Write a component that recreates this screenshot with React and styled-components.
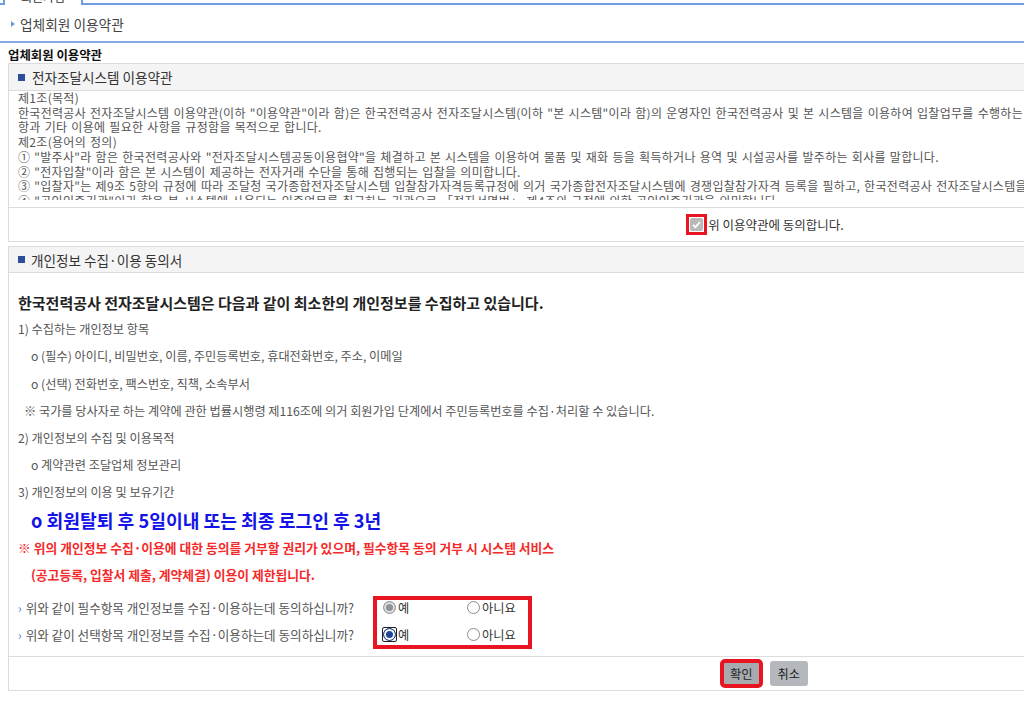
import React from "react";
import styled, { createGlobalStyle } from "styled-components";

const GlobalStyle = createGlobalStyle`
	html,
	body {
		margin: 0;
		padding: 0;
		overflow: hidden;
		background: #fff;
	}
	body {
		font-family: "Noto Sans CJK KR", "Malgun Gothic", sans-serif;
		color: #555;
	}
	* {
		box-sizing: border-box;
	}
`;

const Page = styled.div`
	width: 1530px;
`;

const TabBar = styled.div`
	display: flex;
	align-items: flex-end;
	height: 5px;
	padding-left: 3px;
	border-bottom: 2px solid #6f9be0;
`;

const Tab = styled.div`
	flex-shrink: 0;
	width: 80px;
	height: 16px;
	margin-bottom: -2px;
	border: 2px solid #6f9be0;
	border-bottom: none;
	background: #fff;
	font-size: 12px;
	line-height: 12px;
	text-align: center;
	color: #333;
`;

const Breadcrumb = styled.div`
	display: flex;
	align-items: center;
	gap: 5px;
	padding: 11px 0 9px 11px;
	line-height: 16px;
	font-size: 13.7px;
	color: #444;
	border-bottom: 2px solid #86a9e1;
`;

const Arrow = styled.span`
	width: 0;
	height: 0;
	border-left: 4px solid #6e9be0;
	border-top: 3.5px solid transparent;
	border-bottom: 3.5px solid transparent;
`;

const Title = styled.h2`
	margin: 0;
	padding: 5px 8px 0;
	line-height: 15px;
	font-size: 12.4px;
	font-weight: 700;
	color: #111;
`;

const Box = styled.section`
	margin: ${(p) => (p.$spaced ? "4px" : "0")} 8px 0;
	border: 1px solid #dcdcdc;
`;

const BoxHeader = styled.div`
	display: flex;
	align-items: center;
	gap: ${(p) => p.$gap}px;
	height: ${(p) => p.$height}px;
	padding-left: ${(p) => p.$pad}px;
	background: #f4f4f4;
	border-bottom: 1px solid #dcdcdc;
	font-size: ${(p) => p.$size}px;
	color: #333;
`;

const Square = styled.span`
	width: ${(p) => p.$size}px;
	height: ${(p) => p.$size}px;
	background: #2c4d9b;
`;

const TermsCell = styled.div`
	padding: 0 9px 7px;
	border-bottom: 1px solid #dcdcdc;
`;

const TermsScroll = styled.div`
	height: 109px;
	overflow: hidden;
	font-size: 12px;
	line-height: 14.7px;
	letter-spacing: 0.3px;
	word-spacing: 1px;
	color: #555;
	white-space: nowrap;

	p {
		margin: 0;
	}
`;

const AgreeRow = styled.label`
	display: flex;
	justify-content: center;
	align-items: center;
	gap: 1px;
	height: 33px;
	font-size: 12.5px;
	color: #333;
`;

const Mark = styled.span`
	display: inline-flex;
	padding: 1px;
	border: 3px solid #e8141f;
`;

const Checkbox = styled.span`
	display: inline-flex;
	align-items: center;
	justify-content: center;
	width: 13px;
	height: 13px;
	border-radius: 2px;
	background: #b9b9b9;
`;

const Content = styled.div`
	padding: 16px 9px 8px;
	line-height: 27.2px;
	white-space: nowrap;
`;

const Heading = styled.div`
	font-size: 15px;
	font-weight: 700;
	color: #222;
`;

const Line = styled.div`
	padding-left: ${(p) => p.$indent || 0}px;
	font-size: 12.2px;
	color: #555;
`;

const Highlight = styled.div`
	padding-left: 13px;
	font-size: 18.2px;
	font-weight: 700;
	color: #1414e8;
`;

const Warning = styled.div`
	padding-left: ${(p) => p.$indent || 0}px;
	font-size: 12.8px;
	font-weight: 700;
	color: #f52a2a;
`;

const QuestionArea = styled.div`
	display: flex;
	padding-left: 9px;
	margin-bottom: 7px;
`;

const Questions = styled.div`
	display: flex;
	flex-direction: column;
	gap: 12px;
	width: 355px;
	padding-top: 4px;
`;

const Question = styled.div`
	display: flex;
	align-items: center;
	gap: 4px;
	height: 15px;
	font-size: 12.6px;
	color: #555;
	white-space: nowrap;
`;

const Chevron = styled.span`
	font-size: 12px;
	color: #4d7fd3;
`;

const Answers = styled.div`
	display: flex;
	flex-direction: column;
	gap: 12px;
	padding: 0 12px 3px 6px;
	border: 4px solid #e8141f;
`;

const AnswerRow = styled.div`
	display: flex;
	align-items: center;
	height: 15px;
`;

const Option = styled.label`
	display: flex;
	align-items: center;
	gap: 2px;
	width: ${(p) => p.$width || "auto"};
	font-size: 12.2px;
	color: #333;
`;

const radioLook = {
	disabled: "border: 1px solid #9a9a9a; background: #8f9397; box-shadow: inset 0 0 0 2px #dedede;",
	off: "border: 1px solid #8a8a8a; background: #fff;",
	on: "border: 1px solid #1c3f82; background: #1f4796; box-shadow: inset 0 0 0 2px #fff;",
};

const Radio = styled.span`
	position: relative;
	flex-shrink: 0;
	width: 13px;
	height: 13px;
	border-radius: 50%;
	${(p) => radioLook[p.$state]}

	${(p) =>
		p.$focused &&
		`
		&::after {
			content: "";
			position: absolute;
			inset: -2px;
			border: 1px solid #222;
			border-radius: 2px;
		}
	`}
`;

const ButtonRow = styled.div`
	display: flex;
	justify-content: center;
	align-items: center;
	gap: 9px;
	height: 34px;
	border-top: 1px solid #dcdcdc;
`;

const Button = styled.button`
	height: 25px;
	padding: 0 8px;
	border: none;
	border-radius: 3px;
	background: ${(p) => (p.$primary ? "#a7abaf" : "#b4b8bc")};
	font-family: inherit;
	font-size: 12.2px;
	color: #222;
	cursor: pointer;
	${(p) => p.$marked && "outline: 4px solid #e8141f; outline-offset: -2px;"}
`;

const terms = [
	"제1조(목적)",
	'한국전력공사 전자조달시스템 이용약관(이하 "이용약관"이라 함)은 한국전력공사 전자조달시스템(이하 "본 시스템"이라 함)의 운영자인 한국전력공사 및 본 시스템을 이용하여 입찰업무를 수행하는 자의 권리, 의무 및 책임사',
	"항과 기타 이용에 필요한 사항을 규정함을 목적으로 합니다.",
	"제2조(용어의 정의)",
	'① "발주사"라 함은 한국전력공사와 "전자조달시스템공동이용협약"을 체결하고 본 시스템을 이용하여 물품 및 재화 등을 획득하거나 용역 및 시설공사를 발주하는 회사를 말합니다.',
	'② "전자입찰"이라 함은 본 시스템이 제공하는 전자거래 수단을 통해 집행되는 입찰을 의미합니다.',
	'③ "입찰자"는 제9조 5항의 규정에 따라 조달청 국가종합전자조달시스템 입찰참가자격등록규정에 의거 국가종합전자조달시스템에 경쟁입찰참가자격 등록을 필하고, 한국전력공사 전자조달시스템을 이용하는 자를 말합니다.',
	'④ "공인인증기관"이라 함은 본 시스템에 사용되는 인증업무를 취급하는 기관으로 「전자서명법」 제4조의 규정에 의한 공인인증기관을 의미합니다.',
	"⑤ 기타 이 약관에서 정하지 아니한 용어는 관계 법령에서 정하는 바에 따릅니다.",
];

const questions = [
	{ text: "위와 같이 필수항목 개인정보를 수집·이용하는데 동의하십니까?", yes: "disabled", focused: false },
	{ text: "위와 같이 선택항목 개인정보를 수집·이용하는데 동의하십니까?", yes: "on", focused: true },
];

function App() {
	return (
		<Page>
			<GlobalStyle />
			<TabBar>
				<Tab>회원가입</Tab>
			</TabBar>
			<Breadcrumb>
				<Arrow />
				업체회원 이용약관
			</Breadcrumb>
			<Title>업체회원 이용약관</Title>

			<Box>
				<BoxHeader $height={27} $pad={9} $gap={7} $size={13.6}>
					<Square $size={7} />
					전자조달시스템 이용약관
				</BoxHeader>
				<TermsCell>
					<TermsScroll>
						{terms.map((t, i) => (
							<p key={i}>{t}</p>
						))}
					</TermsScroll>
				</TermsCell>
				<AgreeRow>
					<Mark>
						<Checkbox>
							<svg width="11" height="11" viewBox="0 0 11 11">
								<path d="M2 5.8 L4.4 8.2 L9 3" fill="none" stroke="#fff" strokeWidth="1.8" />
							</svg>
						</Checkbox>
					</Mark>
					위 이용약관에 동의합니다.
				</AgreeRow>
			</Box>

			<Box $spaced>
				<BoxHeader $height={26} $pad={9} $gap={6} $size={13.6}>
					<Square $size={7} />
					개인정보 수집·이용 동의서
				</BoxHeader>
				<Content>
					<Heading>한국전력공사 전자조달시스템은 다음과 같이 최소한의 개인정보를 수집하고 있습니다.</Heading>
					<Line>1) 수집하는 개인정보 항목</Line>
					<Line $indent={13}>o (필수) 아이디, 비밀번호, 이름, 주민등록번호, 휴대전화번호, 주소, 이메일</Line>
					<Line $indent={13}>o (선택) 전화번호, 팩스번호, 직책, 소속부서</Line>
					<Line $indent={6}>
						※ 국가를 당사자로 하는 계약에 관한 법률시행령 제116조에 의거 회원가입 단계에서 주민등록번호를 수집·처리할 수 있습니다.
					</Line>
					<Line>2) 개인정보의 수집 및 이용목적</Line>
					<Line $indent={13}>o 계약관련 조달업체 정보관리</Line>
					<Line>3) 개인정보의 이용 및 보유기간</Line>
					<Highlight>o 회원탈퇴 후 5일이내 또는 최종 로그인 후 3년</Highlight>
					<Warning>
						※ 위의 개인정보 수집·이용에 대한 동의를 거부할 권리가 있으며, 필수항목 동의 거부 시 시스템 서비스
					</Warning>
					<Warning $indent={13}>(공고등록, 입찰서 제출, 계약체결) 이용이 제한됩니다.</Warning>
				</Content>

				<QuestionArea>
					<Questions>
						{questions.map((q) => (
							<Question key={q.text}>
								<Chevron>›</Chevron>
								{q.text}
							</Question>
						))}
					</Questions>
					<Answers>
						{questions.map((q) => (
							<AnswerRow key={q.text}>
								<Option $width="84px">
									<Radio $state={q.yes} $focused={q.focused} />
									예
								</Option>
								<Option>
									<Radio $state="off" />
									아니요
								</Option>
							</AnswerRow>
						))}
					</Answers>
				</QuestionArea>

				<ButtonRow>
					<Button $primary $marked>
						확인
					</Button>
					<Button>취소</Button>
				</ButtonRow>
			</Box>
		</Page>
	);
}

export default App;
